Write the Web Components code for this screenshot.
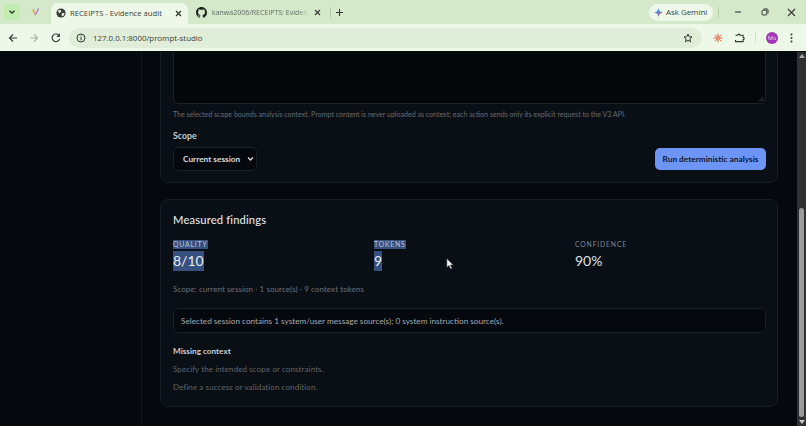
<!DOCTYPE html>
<html><head><meta charset="utf-8"><style>
html,body{margin:0;height:426px;overflow:hidden;background:#05080c}
body{display:flex;flex-direction:column;width:806px}
</style></head><body>
<chrome-tabs></chrome-tabs>
<chrome-toolbar></chrome-toolbar>
<app-window>
  <form-card></form-card>
  <findings-card></findings-card>
</app-window>
<template id="tabs-t"><style>
:host{display:flex;align-items:center;height:24px;background:#d4e8ca;font:400 7.6px "Open Sans","Liberation Sans",sans-serif;color:#30382e;flex:none;box-sizing:border-box}
.sq{width:16px;height:16px;margin-left:4px;border-radius:5px;background:#c3edb0;display:flex;align-items:center;justify-content:center}
.spark{width:16px;margin-left:7px;display:flex;justify-content:center}
.active{width:137px;height:21px;margin:3px 0 0 8px;background:#eef8e8;border-radius:7px 7px 0 0;display:flex;align-items:center;box-sizing:border-box;padding:0 6px 1px 5px;gap:4px;color:#39413a;font-size:7.7px}
.tab2{width:142px;display:flex;align-items:center;box-sizing:border-box;padding:0 9px 0 8px;gap:5px;color:#59625a;font-size:7px}
.lbl{flex:1;white-space:nowrap;min-width:0}
.fade{color:#59625a;background:linear-gradient(90deg,#59625a 88%,#d4e8ca00);-webkit-background-clip:text;background-clip:text;-webkit-text-fill-color:transparent}
.sep{width:1px;height:11px;background:#b6cfa9}
.plus{margin-left:4px;display:flex}
.grow{flex:1}
.gem{height:17px;width:64px;background:#eef8e8;border-radius:9px;display:flex;align-items:center;gap:3px;box-sizing:border-box;padding-left:5px;font-size:7.900px;color:#353c34;margin-right:5px;white-space:nowrap}
.win{display:flex;align-items:center}
.win span{width:27px;display:flex;justify-content:center}
</style>
<div class="sq"><svg width="8" height="8" viewBox="0 0 8 8" fill="none" stroke="#20301c" stroke-width="1.3"><path d="M1.500 2.700 4 5.200 6.500 2.700"/></svg></div>
<div class="spark"><svg width="10" height="10" viewBox="0 0 10 10" fill="none" stroke-width="1.200"><path d="M1 3.500 4 4.500" stroke="#e0d060"/><path d="M3 2 5.300 8" stroke="#e29a70"/><path d="M5.300 8 8.500 1.500" stroke="#b070d0"/></svg></div>
<div class="active">
<svg width="10" height="10" viewBox="0 0 10 10" style="flex:none"><circle cx="5" cy="5" r="4.600" fill="#3b423c"/><path d="M2 2.500 4.600 2l.6 1.600L3.800 5 2.400 4.200zM6 5l2.600.2-1.400 3L5.600 7.400z" fill="#eef8e8"/></svg>
<span class="lbl">RECEIPTS - Evidence audit</span>
<svg width="7" height="7" viewBox="0 0 7 7" stroke="#2d332c" stroke-width="1.200" style="flex:none"><path d="M1 1l5 5M6 1 1 6"/></svg>
</div>
<div class="tab2">
<svg width="11" height="11" viewBox="0 0 16 16" fill="#1d211d" style="flex:none"><path d="M8 0C3.580 0 0 3.580 0 8c0 3.540 2.290 6.530 5.470 7.590.4.07.55-.17.55-.38 0-.19-.01-.82-.01-1.490-2.010.37-2.530-.49-2.690-.94-.09-.23-.48-.94-.82-1.130-.28-.15-.68-.52-.01-.53.63-.01 1.080.58 1.230.82.72 1.210 1.870.87 2.330.66.07-.52.28-.87.51-1.070-1.780-.2-3.640-.89-3.640-3.950 0-.87.31-1.590.82-2.150-.08-.2-.36-1.020.08-2.120 0 0 .67-.21 2.200.82.64-.18 1.320-.27 2-.27s1.360.09 2 .27c1.530-1.040 2.200-.82 2.200-.82.44 1.100.16 1.920.08 2.120.51.56.82 1.270.82 2.150 0 3.070-1.870 3.750-3.650 3.950.29.25.54.73.54 1.480 0 1.070-.01 1.930-.01 2.200 0 .21.15.46.55.38A8 8 0 0 0 16 8c0-4.420-3.580-8-8-8z"/></svg>
<span class="lbl fade">kanwa2006/RECEIPTS: Evidence</span>
<svg width="7" height="7" viewBox="0 0 7 7" stroke="#3a4039" stroke-width="1.200" style="flex:none"><path d="M1 1l5 5M6 1 1 6"/></svg>
</div>
<div class="sep"></div>
<div class="plus"><svg width="9" height="9" viewBox="0 0 9 9" stroke="#333a32" stroke-width="1.100"><path d="M4.500 1v7M1 4.500h7"/></svg></div>
<div class="grow"></div>
<div class="gem"><svg width="9" height="9" viewBox="0 0 10 10"><path d="M5 0C5.400 3 7 4.600 10 5 7 5.400 5.400 7 5 10 4.600 7 3 5.400 0 5 3 4.600 4.600 3 5 0z" fill="#4a86e8"/><path d="M5 5 10 5C7 5.400 5.400 7 5 10z" fill="#e0637a"/></svg>Ask Gemini</div>
<div class="sep"></div>
<div class="win" style="margin:0 1px 0 5px">
<span><svg width="8" height="2"><path d="M1 1h6" stroke="#333a32" stroke-width="1.100"/></svg></span>
<span><svg width="8" height="8" viewBox="0 0 8 8" fill="none" stroke="#333a32"><rect x="1" y="2.200" width="4.800" height="4.800" rx="1"/><path d="M2.500 1H6a1 1 0 0 1 1 1v3.500"/></svg></span>
<span><svg width="9" height="9" viewBox="0 0 9 9" stroke="#333a32" stroke-width="1.100"><path d="M1 1l7 7M8 1 1 8"/></svg></span>
</div>
</template>
<template id="toolbar-t"><style>
:host{display:flex;align-items:center;height:27px;background:#eef8e8;border-bottom:1px solid #0a0c0c;flex:none;font:400 7.900px "Open Sans","Liberation Sans",sans-serif;color:#38413a}
.b{display:flex;justify-content:center;align-items:center;width:21px}
.pill{flex:1;height:20px;background:#e0eed9;border-radius:10px;margin-left:3px;display:flex;align-items:center;padding:0 9px 0 7px;gap:7px}
.pill .u{flex:1}
.ds{display:flex;align-items:center;margin-left:5px}
.sep{width:1px;height:11px;background:#cfe3c4;margin:0 10px 0 5px}
.av{width:12px;height:12px;border-radius:50%;background:#a235b8;color:#f4dff6;font-size:6px;display:flex;align-items:center;justify-content:center}
</style>
<div class="b" style="margin-left:2px"><svg width="10" height="10" viewBox="0 0 10 10" fill="none" stroke="#333b33" stroke-width="1.100"><path d="M9 5H1.500M5 1.500 1.500 5 5 8.500"/></svg></div>
<div class="b"><svg width="10" height="10" viewBox="0 0 10 10" fill="none" stroke="#a4b4a0" stroke-width="1.100"><path d="M1 5h7.500M5 1.500 8.500 5 5 8.500"/></svg></div>
<div class="b" style="margin-left:1px"><svg width="10" height="10" viewBox="0 0 10 10" fill="none" stroke="#333b33" stroke-width="1.200"><path d="M8.600 5.800A3.800 3.800 0 1 1 7.700 2.200M8.300.8v2.500H5.800"/></svg></div>
<div class="pill">
<svg width="10" height="10" viewBox="0 0 10 10" fill="none" stroke="#333b33" style="flex:none"><circle cx="5" cy="5" r="4"/><path d="M5 4.300v3M5 2.500v1"/></svg>
<span class="u">127.0.0.1:8000/prompt-studio</span>
<svg width="10" height="10" viewBox="0 0 10 10" fill="none" stroke="#30382f" stroke-width="1"><path d="M5 1l1.200 2.700 2.800.3-2.100 1.900.6 2.900L5 7.300 2.500 8.800l.6-2.900L1 4l2.800-.3z"/></svg>
</div>
<div class="ds">
<div class="b" style="width:22px"><svg width="10" height="10" viewBox="0 0 10 10"><g stroke="#e86a50" stroke-width="1"><path d="M5 .500v9M.500 5h9M1.800 1.800l6.400 6.400M8.200 1.800 1.800 8.200"/></g><circle cx="5" cy="5" r="2.500" fill="#e8907a"/></svg></div>
<div class="b"><svg width="11" height="11" viewBox="0 0 11 11" fill="none" stroke="#30382f" stroke-width="1.100"><path d="M1.500 3.200h2.200a1.100 1.100 0 0 1 2.200 0h3.200v2.200a1.100 1.100 0 0 1 0 2.200v2H1.500V7.900"/></svg></div>
<div class="sep"></div>
<div class="av">Ms</div>
<div class="b" style="width:27px;margin-right:1px"><svg width="3" height="10"><g fill="#30382f"><circle cx="1.500" cy="1.500" r="1"/><circle cx="1.500" cy="5" r="1"/><circle cx="1.500" cy="8.500" r="1"/></g></svg></div>
</div>
</template>
<template id="window-t"><style>
:host{display:flex;flex:1;min-height:0;overflow:hidden;background:#05080c;font-family:"Lato","Liberation Sans",sans-serif}
.side{width:141px;flex:none;border-right:1px solid #10151b;background:#05080c}
.main{flex:1;min-width:0;overflow:hidden;padding:0 19px 0 18px}
.stack{display:flex;flex-direction:column;gap:16px;margin-top:-52px}
.sb{width:9px;flex:none;background:#2f3130;display:flex;flex-direction:column;align-items:center;box-sizing:border-box;padding:2px 0}
.ar{width:0;height:0;border-left:3px solid transparent;border-right:3px solid transparent;flex:none}
.th{width:5px;background:#9a9c9b;border-radius:3px;flex:1;margin:150px 0 3px}
</style>
<div class="side"></div>
<div class="main"><div class="stack"><slot></slot></div></div>
<div class="sb"><div class="ar" style="border-bottom:4px solid #a9aba9"></div><div class="th"></div><div class="ar" style="border-top:4px solid #c9cbc9"></div></div>
</template>
<template id="form-t"><style>
:host{display:block;background:#0a0f16;border:1px solid #171d24;border-radius:8px;padding:0 11px 11px 12px;box-sizing:border-box;color:#dfe3e8}
.ta{height:103px;background:#04070a;border:1px solid #1c222a;border-radius:5px;box-sizing:border-box;position:relative}
.grip{position:absolute;right:1px;bottom:1px}
.hint{font:400 7.050px "Lato","Liberation Sans",sans-serif;color:#666c73;margin:6px 0 0;line-height:10px;height:10px;white-space:nowrap}
.lab{font:700 8.800px "Lato","Liberation Sans",sans-serif;color:#c5cad0;margin-top:10px;line-height:12px;height:12px}
.row{display:flex;justify-content:space-between;align-items:center;margin-top:5px}
.sel{width:84px;height:24px;background:#05080c;border:1px solid #1a2028;border-radius:5px;box-sizing:border-box;display:flex;align-items:center;justify-content:space-between;padding:0 2px 0 9px;font:700 8.300px "Lato","Liberation Sans",sans-serif;color:#d8dce0;white-space:nowrap}
.btn{height:22px;width:111px;background:#6d95f5;border-radius:5px;color:#0d1830;font:700 8.300px "Lato","Liberation Sans",sans-serif;display:flex;align-items:center;justify-content:center;white-space:nowrap}
</style>
<div class="ta"><svg class="grip" width="6" height="6" viewBox="0 0 6 6" stroke="#5c6268" stroke-width=".7"><path d="M1 5.500 5.500 1M3.500 5.500l2-2"/></svg></div>
<p class="hint">The selected scope bounds analysis context. Prompt content is never uploaded as context; each action sends only its explicit request to the V3 API.</p>
<div class="lab">Scope</div>
<div class="row"><div class="sel"><span>Current session</span><svg width="7" height="6" viewBox="0 0 7 6" fill="none" stroke="#d8dce0" stroke-width="1.300"><path d="M1 1.500 3.500 4 6 1.500"/></svg></div><div class="btn">Run deterministic analysis</div></div>
</template>
<template id="findings-t"><style>
:host{display:block;background:#0a0f16;border:1px solid #171d24;border-radius:8px;padding:0 11px 0 12px;height:208px;box-sizing:border-box;color:#e4e7ea;position:relative}
h2{font:500 11.200px "Lato","Liberation Sans",sans-serif;margin:13px 0 0;line-height:13px;color:#e0e3e6;letter-spacing:.15px}
.grid{display:grid;grid-template-columns:201px 201px 1fr;margin-top:14px}
.k{font:400 6.800px "Lato","Liberation Sans",sans-serif;letter-spacing:.85px;line-height:9px;height:9px;color:#7e848c;display:block}
.k mark{display:inline-block;line-height:9px}
.v{font:400 14px "Lato","Liberation Sans",sans-serif;line-height:20px;margin-top:2px;display:block;color:#dfe3e7}
.v mark{display:inline-block;line-height:20px;color:#e8edf3}
mark{background:#36507f;color:#b9c6dc;padding:0}
.scope{font:400 8px "Lato","Liberation Sans",sans-serif;color:#6a7077;margin-top:13px;line-height:11px;letter-spacing:.08px}
.box{height:25px;background:#05080c;border:1px solid #1a2028;border-radius:5px;box-sizing:border-box;margin-top:13px;display:flex;align-items:center;padding:0 7px;font:400 8.200px "Lato","Liberation Sans",sans-serif;color:#a5abb2;white-space:nowrap}
h3{font:700 8.200px "Lato","Liberation Sans",sans-serif;color:#c9cdd2;margin:13px 0 0;line-height:11px}
p{font:400 8px "Lato","Liberation Sans",sans-serif;color:#5f656c;margin:7px 0 0;line-height:11px;letter-spacing:.1px}
.cursor{position:absolute;left:285px;top:58px}
</style>
<h2>Measured findings</h2>
<div class="grid">
<div><span class="k"><mark>QUALITY</mark></span><span class="v"><mark>8/10</mark></span></div>
<div><span class="k"><mark>TOKENS</mark></span><span class="v"><mark>9</mark></span></div>
<div><span class="k">CONFIDENCE</span><span class="v">90%</span></div>
</div>
<div class="scope">Scope: current session · 1 source(s) · 9 context tokens</div>
<div class="box">Selected session contains 1 system/user message source(s); 0 system instruction source(s).</div>
<h3>Missing context</h3>
<p>Specify the intended scope or constraints.</p>
<p>Define a success or validation condition.</p>
<svg class="cursor" width="8" height="12" viewBox="0 0 8 12"><path d="M.8.500v9l2.200-2 1.500 3.500 1.500-.7L4.500 7H7.300z" fill="#f4f4f4" stroke="#222" stroke-width=".5"/></svg>
</template>
<script>
function def(name,tpl){customElements.define(name,class extends HTMLElement{constructor(){super();this.attachShadow({mode:'open'}).appendChild(document.getElementById(tpl).content.cloneNode(true));}});}
def('chrome-tabs','tabs-t');def('chrome-toolbar','toolbar-t');def('app-window','window-t');def('form-card','form-t');def('findings-card','findings-t');
</script>
</body></html>
